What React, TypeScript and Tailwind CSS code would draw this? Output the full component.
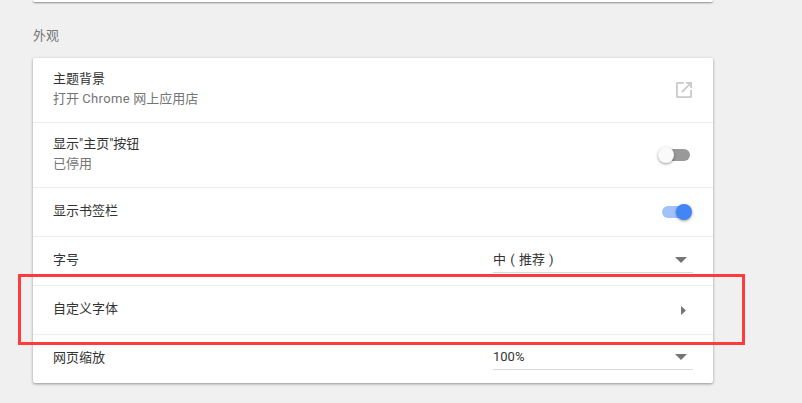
const font = "font-['Roboto','Noto_Sans_CJK_SC',sans-serif]";

function Toggle({ on }: { on: boolean }) {
  return (
    <div className="relative mr-[1px] h-3 w-[32px]">
      <div className={on ? "absolute left-[2px] top-0 h-3 w-[28px] rounded-full bg-[#a1c2fa]" : "absolute left-[2px] top-0 h-3 w-[28px] rounded-full bg-[#999999]"} />
      <div
        className={
          on
            ? "absolute -top-[2px] right-0 size-4 rounded-full bg-[#4285f4] shadow-[0_1px_3px_rgba(0,0,0,0.4)]"
            : "absolute -top-[2px] left-[-2px] size-4 rounded-full bg-[#fafafa] shadow-[0_1px_3px_rgba(0,0,0,0.4)]"
        }
      />
    </div>
  );
}

function SelectBox({ value, raised }: { value: string; raised?: boolean }) {
  return (
    <div
      className={
        raised
          ? "mb-[2px] flex h-[24px] w-[200px] items-center justify-between border-b border-[#dadada] pr-[6px] pb-[1px]"
          : "flex h-[24px] w-[200px] items-center justify-between border-b border-[#dadada] pr-[6px] pb-[1px]"
      }
    >
      <span className="text-[13px] [word-spacing:1px] text-[#333333]">{value}</span>
      <svg width="12" height="6" viewBox="0 0 12 6">
        <path d="M0 0h12L6 6z" fill="#757575" />
      </svg>
    </div>
  );
}

function Row({ title, sub, right, tall }: { title: string; sub?: React.ReactNode; right?: React.ReactNode; tall?: boolean }) {
  return (
    <div
      className={
        tall
          ? "flex h-[65px] items-center justify-between border-b border-[#ececec] pl-5 pr-5"
          : "flex h-[49px] items-center justify-between border-b border-[#ececec] pl-5 pr-5 last:h-[48px] last:border-b-0"
      }
    >
      <div className="flex flex-col pb-[2px] text-[13px] leading-[20px]">
        <span className="text-[#333333]">{title}</span>
        {sub && <span className="text-[#757575]">{sub}</span>}
      </div>
      {right}
    </div>
  );
}

export default function App() {
  return (
    <div className={`relative h-[403px] w-[802px] overflow-hidden bg-[#f0f0f0] ${font}`}>
      <div className="mx-[33px] h-[2px] w-[680px] rounded-b-sm bg-white shadow-[0_1px_2px_rgba(0,0,0,0.45)]" />

      <h2 className="ml-[33px] mt-[25px] h-[31px] text-[13px] font-normal leading-[18px] text-[#757575]">外观</h2>

      <div className="ml-[33px] w-[680px] rounded-[2px] bg-white shadow-[0_1px_3px_rgba(0,0,0,0.4)]">
        <Row
          tall
          title="主题背景"
          sub={
            <>
              打开 <span className="tracking-[0.35px]">Chrome</span> 网上应用店
            </>
          }
          right={
            <svg width="16" height="16" viewBox="0 0 18 18" className="mr-[1px]">
              <path
                d="M16 16H2V2h7V0H2C.9 0 0 .9 0 2v14c0 1.1.9 2 2 2h14c1.1 0 2-.9 2-2V9h-2v7zM11 0v2h3.6L5.8 10.8l1.4 1.4L16 3.4V7h2V0h-7z"
                fill="#c9c9c9"
              />
            </svg>
          }
        />
        <Row tall title={'显示"主页"按钮'} sub="已停用" right={<Toggle on={false} />} />
        <Row title="显示书签栏" right={<Toggle on />} />
        <Row title="字号" right={<SelectBox value="中 ( 推荐 )" />} />
        <Row
          title="自定义字体"
          right={
            <svg width="5" height="9" viewBox="0 0 5 9" className="mr-[7px]">
              <path d="M0 0l5 4.5L0 9z" fill="#757575" />
            </svg>
          }
        />
        <Row title="网页缩放" right={<SelectBox raised value="100%" />} />
      </div>

      {/* red annotation drawn over the screenshot */}
      <div className="absolute left-[18px] top-[274px] h-[71px] w-[727px] border-[3px] border-[#ff3b3b]" />
    </div>
  );
}
